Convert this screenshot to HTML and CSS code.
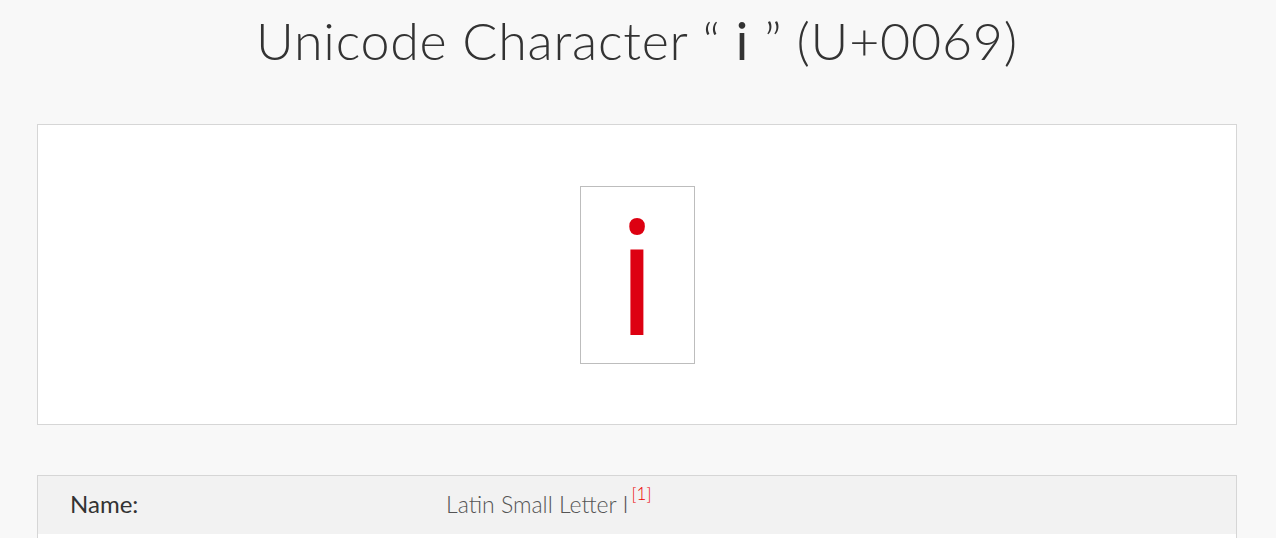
FILE: index.html
```html
<!DOCTYPE html>
<html>
<head>
<meta charset="utf-8">
<link rel="stylesheet" href="styles.css">
</head>
<body>
<div class="page">
  <h1 class="title">Unicode Character “ <span class="title-char">i</span> ” (U+0069)</h1>
  <section class="preview">
    <div class="glyph-box"><span class="glyph">i</span></div>
  </section>
  <div class="info">
    <div class="info-row row-alt">
      <div class="info-label">Name:</div>
      <div class="info-value">Latin Small Letter I<sup class="ref">[1]</sup></div>
    </div>
    <div class="info-row"></div>
  </div>
</div>
</body>
</html>
```
FILE: styles.css
```css
html, body {
  margin: 0;
  padding: 0;
  background: #f8f8f8;
  font-family: "Lato", "Open Sans", sans-serif;
  color: #333;
  overflow: hidden;
}
.page {
  width: 1200px;
  margin: 0 0 0 37px;
  padding-top: 5px;
}
.title {
  margin: 0;
  text-align: center;
  font-weight: 300;
  font-size: 52px;
  letter-spacing: 0.75px;
  line-height: 70px;
  color: #333;
  height: 119px;
  white-space: nowrap;
}
.title-char {
  font-weight: 400;
}
.preview {
  background: #fff;
  border: 1px solid #d6d6d6;
  height: 301px;
  display: flex;
  justify-content: center;
  align-items: flex-start;
  padding-top: 61px;
  box-sizing: border-box;
}
.glyph-box {
  width: 115px;
  height: 178px;
  border: 1px solid #bdbdbd;
  box-sizing: border-box;
  display: flex;
  justify-content: center;
  align-items: center;
}
.glyph {
  font-family: "Open Sans", sans-serif;
  font-size: 160px;
  line-height: 1;
  color: #dd0011;
  margin-top: -4px;
}
.info {
  margin-top: 50px;
  border: 1px solid #d6d6d6;
  background: #fff;
}
.info-row {
  height: 58px;
  display: flex;
  align-items: center;
}
.row-alt {
  background: #f2f2f2;
}
.info-label {
  width: 376px;
  padding-left: 32px;
  font-size: 24px;
  line-height: 30px;
  font-weight: 400;
  color: #333;
  flex: none;
  margin-top: -3px;
}
.info-value {
  font-size: 23px;
  line-height: 30px;
  font-weight: 300;
  color: #555;
  margin-top: -3px;
}
.ref {
  color: #e00;
  font-size: 17px;
  line-height: 0;
  font-weight: 300;
  margin-left: 3px;
  vertical-align: 13px;
}
```
